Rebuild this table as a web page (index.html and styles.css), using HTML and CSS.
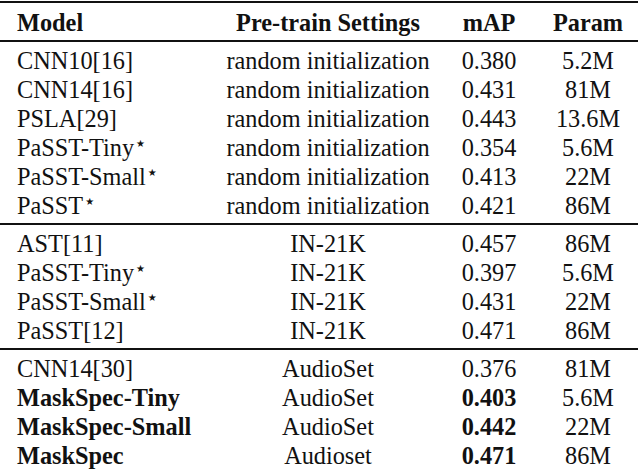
FILE: index.html
```html
<!DOCTYPE html>
<html>
<head>
<meta charset="utf-8">
<link rel="stylesheet" href="styles.css">
</head>
<body>
<table class="results">
  <colgroup>
    <col class="c-model">
    <col class="c-pre">
    <col class="c-map">
    <col class="c-param">
  </colgroup>
  <thead>
    <tr>
      <th class="model">Model</th>
      <th>Pre-train Settings</th>
      <th>mAP</th>
      <th>Param</th>
    </tr>
  </thead>
  <tbody class="block">
    <tr><td class="model">CNN10[16]</td><td>random initialization</td><td>0.380</td><td>5.2M</td></tr>
    <tr><td class="model">CNN14[16]</td><td>random initialization</td><td>0.431</td><td>81M</td></tr>
    <tr><td class="model">PSLA[29]</td><td>random initialization</td><td>0.443</td><td>13.6M</td></tr>
    <tr><td class="model">PaSST-Tiny<sup class="star">★</sup></td><td>random initialization</td><td>0.354</td><td>5.6M</td></tr>
    <tr><td class="model">PaSST-Small<sup class="star">★</sup></td><td>random initialization</td><td>0.413</td><td>22M</td></tr>
    <tr><td class="model">PaSST<sup class="star">★</sup></td><td>random initialization</td><td>0.421</td><td>86M</td></tr>
  </tbody>
  <tbody class="block">
    <tr><td class="model">AST[11]</td><td>IN-21K</td><td>0.457</td><td>86M</td></tr>
    <tr><td class="model">PaSST-Tiny<sup class="star">★</sup></td><td>IN-21K</td><td>0.397</td><td>5.6M</td></tr>
    <tr><td class="model">PaSST-Small<sup class="star">★</sup></td><td>IN-21K</td><td>0.431</td><td>22M</td></tr>
    <tr><td class="model">PaSST[12]</td><td>IN-21K</td><td>0.471</td><td>86M</td></tr>
  </tbody>
  <tbody class="block last">
    <tr><td class="model">CNN14[30]</td><td>AudioSet</td><td>0.376</td><td>81M</td></tr>
    <tr><td class="model strong">MaskSpec-Tiny</td><td>AudioSet</td><td class="strong">0.403</td><td>5.6M</td></tr>
    <tr><td class="model strong">MaskSpec-Small</td><td>AudioSet</td><td class="strong">0.442</td><td>22M</td></tr>
    <tr><td class="model strong">MaskSpec</td><td>Audioset</td><td class="strong">0.471</td><td>86M</td></tr>
  </tbody>
</table>
</body>
</html>
```
FILE: styles.css
```css
html, body {
  margin: 0;
  padding: 0;
  background: #ffffff;
}

body {
  padding-top: 1px;
}

.results {
  width: 638px;
  table-layout: fixed;
  border-collapse: collapse;
  font-family: "Liberation Serif", "Times New Roman", serif;
  font-size: 24.3px;
  color: #111111;
}

.c-model { width: 216px; }
.c-pre { width: 224px; }
.c-map { width: 98px; }
.c-param { width: 100px; }

.results th,
.results td {
  padding: 0;
  text-align: center;
  white-space: nowrap;
  line-height: 29px;
}

.results th {
  font-weight: bold;
  padding-top: 5px;
  padding-bottom: 3px;
}

.results .model {
  text-align: left;
  padding-left: 17px;
}

.results thead tr {
  border-top: 2px solid #111111;
  border-bottom: 2px solid #111111;
}

.block {
  border-bottom: 2px solid #111111;
}

.block tr:first-child td {
  padding-top: 4px;
}

.block tr:last-child td {
  padding-bottom: 3px;
}

.strong {
  font-weight: bold;
}

.star {
  font-family: "DejaVu Sans", sans-serif;
  font-size: 10px;
  line-height: 0;
  vertical-align: 9px;
  margin-left: 2px;
}
```
